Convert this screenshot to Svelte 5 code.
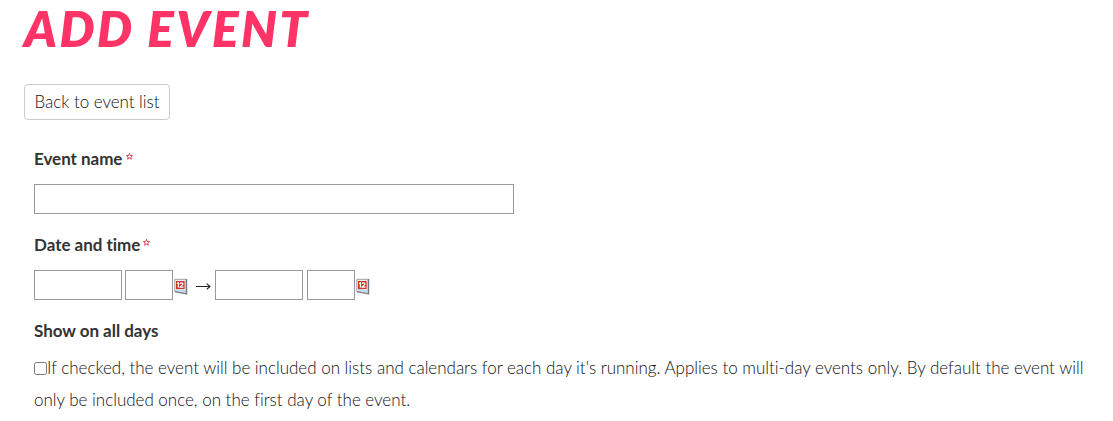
<script lang="ts">
  let name = $state("");
  let start = $state({ date: "", time: "" });
  let end = $state({ date: "", time: "" });
  let showAllDays = $state(false);
</script>

{#snippet calendarIcon()}
  <svg class="calendar" width="14" height="17" viewBox="0 0 14 17" aria-hidden="true">
    <path d="M0.8 1.3 H12.3 V15.5 L0.8 13.4 Z" fill="#e9eef3" stroke="#a0a4a8" stroke-width="1" />
    <path d="M11.8 1 H13.2 V16.3 H11.8 Z" fill="#70767d" />
    <path d="M0.8 13.6 L12.8 16" stroke="#777d84" stroke-width="1.2" />
    <path d="M2 11 L11 12 V14 L2 12.3 Z" fill="#b4d3f1" />
    <rect x="2" y="3" width="8.6" height="8" fill="#d9341c" />
    <path
      d="M3 5.5 L4.4 4.7 V9.6 M6 5.8 C6.3 4.6 8.9 4.5 8.9 6.1 C8.9 7.2 6.6 8 6.1 9.1 H9.5"
      fill="none"
      stroke="#fff"
      stroke-width="1.2"
    />
  </svg>
{/snippet}

{#snippet dateTime(value: { date: string; time: string }, label: string)}
  <input class="date" type="text" aria-label="{label} date" bind:value={value.date} />
  <input class="time" type="text" aria-label="{label} time" bind:value={value.time} />
  {@render calendarIcon()}
{/snippet}

{#snippet required()}
  <svg class="required" width="7" height="7" viewBox="0 0 7 7" role="img" aria-label="required">
    <path d="M3.5 0.4 L4.3 2.5 L6.6 2.6 L4.8 4 L5.4 6.3 L3.5 5.1 L1.6 6.3 L2.2 4 L0.4 2.6 L2.7 2.5 Z" />
  </svg>
{/snippet}

<main>
  <h1>Add event</h1>
  <button class="back" type="button">Back to event list</button>

  <form>
    <label class="title" for="event-name">Event name {@render required()}</label>
    <input id="event-name" type="text" bind:value={name} />

    <div class="title">Date and time {@render required()}</div>
    <div class="range">
      {@render dateTime(start, "Start")}
      <svg class="arrow" width="16" height="9" viewBox="0 0 16 9" aria-hidden="true">
        <path d="M0 4.5 H14 M10.7 1.6 L14 4.5 L10.7 7.4" />
      </svg>
      {@render dateTime(end, "End")}
    </div>

    <div class="title">Show on all days</div>
    <label class="check">
      <input type="checkbox" bind:checked={showAllDays} /><span class="line"
        >If checked, the event will be included on lists and calendars for each day it's running. Applies to multi-day events only. By default the event will</span
      >
      <span class="line second">only be included once, on the first day of the event.</span>
    </label>
  </form>
</main>

<style>
  :global(body) {
    background: #fff;
  }

  main {
    padding: 0 24px;
    color: #111;
    font-family: Lato, "Liberation Sans", sans-serif;
    font-size: 17px;
    font-weight: 300;
    font-variant-ligatures: none;
    letter-spacing: -0.015px;
  }

  h1 {
    height: 60px;
    margin: 0 0 24px;
    color: #ff3366;
    font-size: 49.5px;
    font-style: italic;
    font-weight: 800;
    letter-spacing: 2.5px;
    line-height: 57px;
    text-transform: uppercase;
    white-space: nowrap;
  }

  .back {
    display: block;
    width: 146px;
    height: 36px;
    padding: 0 0 1px 9.5px;
    border: 1px solid #ccc;
    border-radius: 4px;
    background: #fff;
    color: #111;
    font: inherit;
    letter-spacing: -0.03px;
    text-align: left;
    white-space: nowrap;
  }

  form {
    padding: 24px 0 0 10px;
  }

  .title {
    display: block;
    height: 32px;
    color: #333;
    font-weight: 700;
    letter-spacing: -0.03px;
    line-height: 30px;
    white-space: nowrap;
  }

  .required {
    margin-left: -1px;
    fill: none;
    stroke: #c8203c;
    stroke-width: 0.8;
    vertical-align: 5px;
  }

  input[type="text"] {
    display: block;
    box-sizing: border-box;
    height: 30px;
    margin: 0;
    padding: 2px 5px;
    border: 1px solid #999;
    border-radius: 0;
    background: #fff;
    font: inherit;
  }

  #event-name {
    width: 480px;
    margin: 8px 0 16px;
  }

  .range {
    display: flex;
    margin: 8px 0 16px;
  }

  input.date {
    width: 88px;
    margin-right: 3px;
  }

  .arrow ~ input.date {
    margin-right: 4px;
  }

  input.time {
    width: 48px;
  }

  .calendar {
    flex: none;
    margin: 8px 0 0 1px;
  }

  .arrow {
    flex: none;
    margin: 12px 3px 0 8px;
    fill: none;
    stroke: #222;
    stroke-width: 1.1;
  }

  .check {
    display: grid;
    grid-template-columns: 13px 1fr;
    grid-auto-rows: 32px;
    align-items: center;
    margin-top: 4px;
    line-height: 32px;
  }

  .check input {
    width: 13px;
    height: 13px;
    margin: 0;
  }

  .line {
    white-space: nowrap;
  }

  .second {
    grid-column: 1 / -1;
  }
</style>
